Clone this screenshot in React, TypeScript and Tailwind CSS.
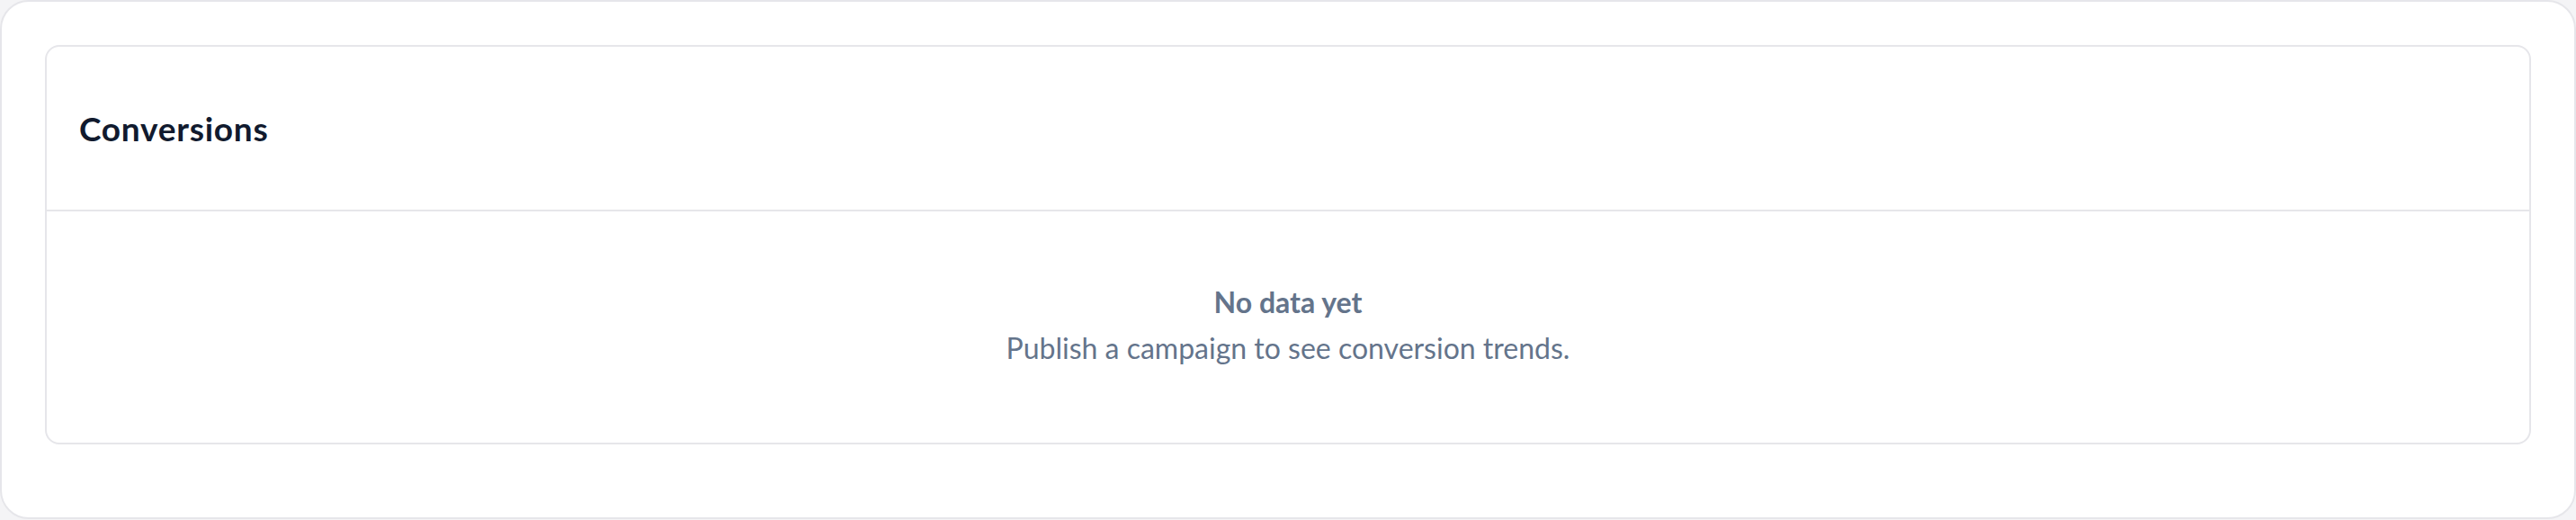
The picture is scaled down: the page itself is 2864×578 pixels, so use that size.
import React from 'react';

export default function App() {
  return (
    <div className="h-[578px] bg-[#f4f4f6] font-['Lato',sans-serif]">
      <div className="w-full h-[577px] bg-white border-2 border-[#e6e6ea] rounded-[32px] pt-12 px-12">
        {/* Conversions card */}
        <div className="h-[444px] border-2 border-[#e6e6ea] rounded-[16px] flex flex-col">
          <div className="h-[183px] px-[36px] flex items-center border-b-2 border-[#e6e6ea]">
            <h2 className="text-[37px] font-bold text-[#111a2e] tracking-[0.02em]">Conversions</h2>
          </div>
          <div className="flex-1 flex flex-col items-center justify-center gap-[3px] pb-[5px]">
            <p className="text-[32px] leading-[48px] font-bold text-[#64748b]">No data yet</p>
            <p className="text-[32px] leading-[48px] text-[#64748b]">Publish a campaign to see conversion trends.</p>
          </div>
        </div>
      </div>
    </div>
  );
}
